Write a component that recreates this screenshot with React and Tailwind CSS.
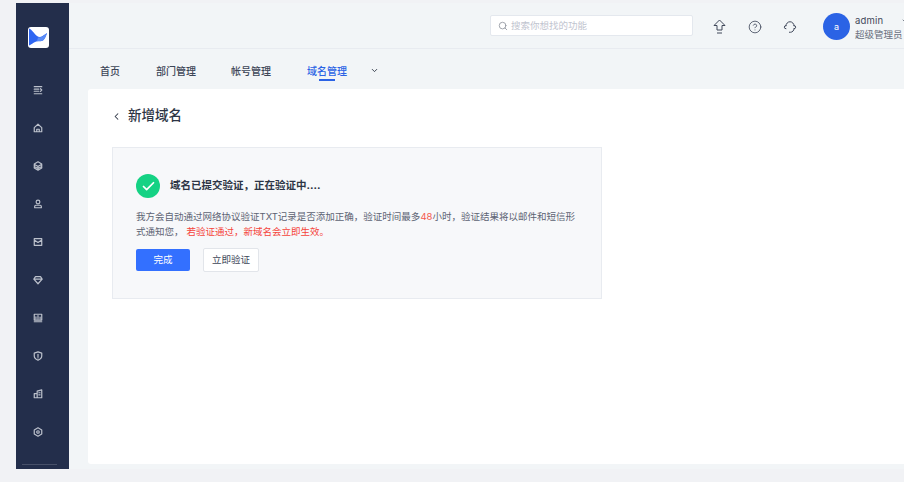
import React from "react";
import { ChevronDown, ChevronLeft, Search, CircleHelp, Check } from "lucide-react";

const S = ({ children, size = 10, w = 1.2 }) => (
  <svg width={size} height={size} viewBox="0 0 24 24" fill="none" stroke="currentColor" strokeWidth={w * 2.4} strokeLinecap="round" strokeLinejoin="round">
    {children}
  </svg>
);

const sideIcons = [
  <S><path d="M3 4h18M3 10h11M3 15h11M3 21h18M18 9l3 3-3 3" /></S>,
  <S><path d="M3 11l9-8 9 8v10H3zM9 21v-6h6v6" /></S>,
  <S><path d="M12 2l9 5v10l-9 5-9-5V7zM3 8l9 5 9-5M3 13l9 5 9-5M12 13v9" /></S>,
  <S><circle cx="12" cy="7" r="4.5" /><path d="M4 21v-3a3 3 0 0 1 3-3h10a3 3 0 0 1 3 3v3z" /></S>,
  <S><path d="M3 4h18v16H3zM3 7l9 6 9-6" /></S>,
  <S><path d="M6 4h12l4 6-10 11L2 10zM2 10h20" /></S>,
  <S><path d="M3 3h18v14H3zM7 14V9M12 14V6M17 14v-4M3 21h18" /></S>,
  <S><path d="M12 2l9 3v7c0 5-4 8-9 10-5-2-9-5-9-10V5zM12 8v5M12 16v.5" /></S>,
  <S><path d="M3 11h7v10H3zM10 21V5l11-3v19zM14 9h3M14 14h3" /></S>,
  <S><path d="M12 2l9 5v10l-9 5-9-5V7z" /><circle cx="12" cy="12" r="3" /></S>,
];

const tabs = [
  ["首页", "w-[56px]"],
  ["部门管理", "w-[75px]"],
  ["帐号管理", "w-[76px]"],
];

export default function App() {
  return (
    <div
      className="w-[904px] h-[482px] overflow-hidden bg-[#f1f2f5] pl-4 pt-[3px]"
      style={{ fontFamily: '"Inter","Noto Sans CJK SC",sans-serif' }}
    >
      <div className="flex h-[466px] w-[888px]">
        <aside className="w-[53px] shrink-0 bg-[#232e4b] flex flex-col items-center pr-[9px] text-[#bcc1cc] relative">
          <div className="mt-6 mb-[23px] w-[21px] h-[21px] rounded-[3px] bg-white overflow-hidden shrink-0">
            <svg width="21" height="21" viewBox="0 0 21 21">
              <path d="M1 1.5c3 1 5 5 8 7.5 2 1.5 4 1 5.5 0L19 6c-1 3-2 6-4 7.5-3 1.5-6 0-9 2-2 1.2-3.500 2.500-5 3z" fill="#2f66f2" />
              <path d="M10 10.500c2 .5 5-1 9-4.500-1 3-2 6-4 7.500-2 .8-4 .5-6 .5z" fill="#5b8cf7" />
            </svg>
          </div>
          <div className="flex flex-col items-center">
            {sideIcons.map((icon, i) => (
              <div key={i} className="h-[38px] flex items-center justify-center">
                {icon}
              </div>
            ))}
          </div>
          <div className="absolute bottom-[4px] left-[6px] w-[35px] h-px bg-[#475069]" />
        </aside>

        <main className="flex-1 min-w-0 bg-[#f2f5f7] flex flex-col">
          <header className="h-[46px] shrink-0 border-b border-[#e8ebf0] flex items-center pl-[421px]">
            <div className="w-[203px] h-[21px] bg-white rounded-[2px] border border-[#e4e8ee] flex items-center pl-[7px] gap-[3px] shrink-0">
              <Search size={10} className="text-[#8f949e]" strokeWidth={2} />
              <span className="text-[9.5px] text-[#bfc4cf] leading-none">搜索你想找的功能</span>
            </div>
            <div className="ml-[19px] mt-[2px] w-[14px] flex justify-center text-[#3f4759] shrink-0">
              <svg width="13" height="15" viewBox="0 0 13 15" fill="none" stroke="currentColor" strokeWidth="1" strokeLinejoin="round">
                <path d="M6.5 1L1 6.5h3V11h5V6.5h3zM4 14h5" />
              </svg>
            </div>
            <div className="ml-[22px] mt-[2px] shrink-0 text-[#3f4759]">
              <CircleHelp size={14} strokeWidth={1.4} />
            </div>
            <div className="ml-[21px] mt-[2px] shrink-0 text-[#3f4759]">
              <svg width="14" height="14" viewBox="0 0 24 24" fill="none" stroke="currentColor" strokeWidth="1.7" strokeLinecap="round">
                <path d="M5 10a7 7 0 0 1 14 0M5 9.500a2.500 2.500 0 0 0 0 5.500M19 9.500a2.500 2.500 0 0 1 0 5.500M19 15c0 3-3 6-6 6h-2" />
              </svg>
            </div>
            <div className="ml-[26px] mt-[2px] w-[27px] h-[27px] rounded-full bg-[#2b63e5] text-white text-[9px] flex items-center justify-center shrink-0">
              a
            </div>
            <div className="ml-[5px] mt-[4px] shrink-0 flex flex-col">
              <div className="flex items-center h-[14px]">
                <span className="text-[9.5px] text-[#3f4759] leading-none tracking-[0.2px]">admin</span>
                <ChevronDown size={8} className="ml-[18px] text-[#3f4759]" />
              </div>
              <span className="text-[9.5px] text-[#666d7c] leading-[14px] whitespace-nowrap">超级管理员</span>
            </div>
          </header>

          <nav className="h-[40px] shrink-0 flex pl-[31px] text-[10px] font-medium text-[#3d4657]">
            {tabs.map(([t, w]) => (
              <div key={t} className={`${w} pt-[15px] leading-[14px]`}>{t}</div>
            ))}
            <div className="w-[63px] pt-[15px] relative text-[#2b63e5] leading-[14px]">
              域名管理
              <div className="absolute left-[12px] top-[30px] w-4 h-[2px] bg-[#2b63e5]" />
            </div>
            <div className="pt-[17px]">
              <ChevronDown size={9} strokeWidth={2.4} className="text-[#2d3545]" />
            </div>
          </nav>

          <section className="ml-[19px] flex-1 min-h-0 mb-[5px] bg-white rounded-tl-[3px] rounded-bl-[3px] pl-6 pt-[16px]">
            <div className="flex items-center h-[22px] text-[#2d3545]">
              <ChevronLeft size={11} strokeWidth={2.2} className="-ml-[1px]" />
              <h1 className="ml-[6px] text-[13.5px] font-medium leading-none">新增域名</h1>
            </div>
            <div className="mt-[20px] w-[490px] h-[152px] bg-[#f7f8fa] border border-[#e8ebf0] pl-[23px] pt-[26px]">
              <div className="flex items-center">
                <div className="w-[24px] h-[24px] rounded-full bg-[#15d284] flex items-center justify-center">
                  <Check size={15} strokeWidth={2.8} className="text-white" />
                </div>
                <h2 className="ml-[10px] text-[10.5px] font-bold text-[#2d3545] leading-none">域名已提交验证，正在验证中....</h2>
              </div>
              <p className="mt-[11px] w-[440px] text-[9.5px] leading-[15px] text-[#5c6373]">
                我方会自动通过网络协议验证TXT记录是否添加正确，验证时间最多<span className="text-[#f5574c]">48</span>小时，验证结果将以邮件和短信形式通知您，
                <span className="text-[#f5443b] ml-[3px]">若验证通过，新域名会立即生效。</span>
              </p>
              <div className="mt-[10px] flex gap-[13px]">
                <button className="w-[54px] h-[22px] rounded-[2px] bg-[#3370ff] text-white text-[9.5px]">完成</button>
                <button className="w-[56px] h-[24px] -mt-px rounded-[2px] bg-white border border-[#e2e5ea] text-[#3d4657] text-[9.5px]">立即验证</button>
              </div>
            </div>
          </section>
        </main>
      </div>
    </div>
  );
}
